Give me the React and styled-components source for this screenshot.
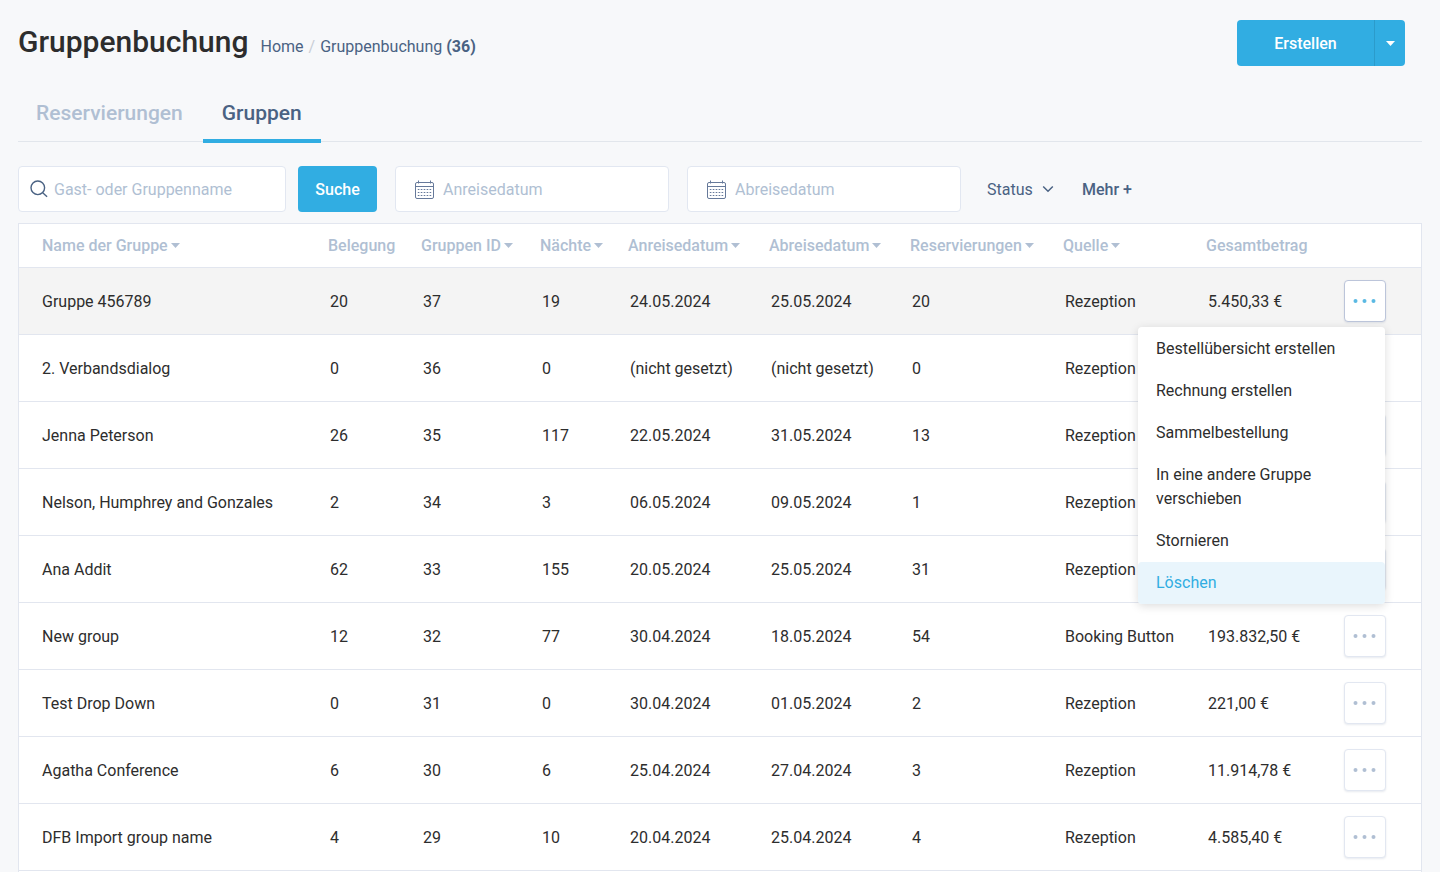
import React, { useState } from 'react';
import styled, { createGlobalStyle, css } from 'styled-components'

const columns = [
  { key: 'name', label: 'Name der Gruppe', width: 297, sort: true },
  { key: 'belegung', label: 'Belegung', width: 93 },
  { key: 'id', label: 'Gruppen ID', width: 119, sort: true },
  { key: 'naechte', label: 'Nächte', width: 88, sort: true },
  { key: 'anreise', label: 'Anreisedatum', width: 141, sort: true },
  { key: 'abreise', label: 'Abreisedatum', width: 141, sort: true },
  { key: 'reservierungen', label: 'Reservierungen', width: 153, sort: true },
  { key: 'quelle', label: 'Quelle', width: 143, sort: true },
  { key: 'betrag', label: 'Gesamtbetrag', width: 138 },
]

const groups = [
  { name: 'Gruppe 456789', belegung: 20, id: 37, naechte: 19, anreise: '24.05.2024', abreise: '25.05.2024', reservierungen: 20, quelle: 'Rezeption', betrag: '5.450,33 €' },
  { name: '2. Verbandsdialog', belegung: 0, id: 36, naechte: 0, anreise: '(nicht gesetzt)', abreise: '(nicht gesetzt)', reservierungen: 0, quelle: 'Rezeption', betrag: '', locked: true },
  { name: 'Jenna Peterson', belegung: 26, id: 35, naechte: 117, anreise: '22.05.2024', abreise: '31.05.2024', reservierungen: 13, quelle: 'Rezeption', betrag: '' },
  { name: 'Nelson, Humphrey and Gonzales', belegung: 2, id: 34, naechte: 3, anreise: '06.05.2024', abreise: '09.05.2024', reservierungen: 1, quelle: 'Rezeption', betrag: '' },
  { name: 'Ana Addit', belegung: 62, id: 33, naechte: 155, anreise: '20.05.2024', abreise: '25.05.2024', reservierungen: 31, quelle: 'Rezeption', betrag: '' },
  { name: 'New group', belegung: 12, id: 32, naechte: 77, anreise: '30.04.2024', abreise: '18.05.2024', reservierungen: 54, quelle: 'Booking Button', betrag: '193.832,50 €' },
  { name: 'Test Drop Down', belegung: 0, id: 31, naechte: 0, anreise: '30.04.2024', abreise: '01.05.2024', reservierungen: 2, quelle: 'Rezeption', betrag: '221,00 €' },
  { name: 'Agatha Conference', belegung: 6, id: 30, naechte: 6, anreise: '25.04.2024', abreise: '27.04.2024', reservierungen: 3, quelle: 'Rezeption', betrag: '11.914,78 €' },
  { name: 'DFB Import group name', belegung: 4, id: 29, naechte: 10, anreise: '20.04.2024', abreise: '25.04.2024', reservierungen: 4, quelle: 'Rezeption', betrag: '4.585,40 €' },
]

const actions = [
  'Bestellübersicht erstellen',
  'Rechnung erstellen',
  'Sammelbestellung',
  'In eine andere Gruppe verschieben',
  'Stornieren',
  'Löschen',
]

function App() {
  const [tab, setTab] = useState('Gruppen')
  const [openId, setOpenId] = useState(37)

  return (
    <Page>
      <GlobalStyle />
      <Header>
        <Heading>
          <Title>Gruppenbuchung</Title>
          <Breadcrumb>
            <Crumb href="#home">Home</Crumb>
            <Slash>/</Slash>
            <Crumb href="#gruppen">Gruppenbuchung <b>(36)</b></Crumb>
          </Breadcrumb>
        </Heading>
        <SplitButton>
          <CreateBtn type="button">Erstellen</CreateBtn>
          <CreateMore type="button" aria-label="Erstellen Optionen"><Caret /></CreateMore>
        </SplitButton>
      </Header>

      <Tabs role="tablist">
        {['Reservierungen', 'Gruppen'].map((name) => (
          <Tab
            key={name}
            type="button"
            role="tab"
            aria-selected={tab === name}
            $active={tab === name}
            onClick={() => setTab(name)}>
            {name}
          </Tab>
        ))}
      </Tabs>

      <Filters />

      <Panel>
        <Table>
          <colgroup>
            {columns.map((c) => <col key={c.key} width={c.width} />)}
            <col width={89} />
          </colgroup>
          <thead>
            <tr>
              {columns.map((c) => (
                <Th key={c.key} scope="col">
                  {c.sort ? <SortBtn type="button">{c.label}<Caret /></SortBtn> : c.label}
                </Th>
              ))}
              <Th as="td" />
            </tr>
          </thead>
          <tbody>
            {groups.map((g) => (
              <Row key={g.id} $active={openId === g.id}>
                {columns.map((c) => <Td key={c.key}>{g[c.key]}</Td>)}
                <ActionTd>
                  {!g.locked && (
                    <ActionMenu
                      name={g.name}
                      open={openId === g.id}
                      onToggle={() => setOpenId(openId === g.id ? null : g.id)} />
                  )}
                </ActionTd>
              </Row>
            ))}
          </tbody>
        </Table>
      </Panel>
    </Page>
  );
}

function Filters() {
  return (
    <FilterBar>
      <SearchField>
        <SearchIcon />
        <Input type="text" aria-label="Gast- oder Gruppenname" placeholder="Gast- oder Gruppenname" />
      </SearchField>
      <SearchBtn type="button">Suche</SearchBtn>
      <DateField>
        <CalendarIcon />
        <Input type="text" aria-label="Anreisedatum" placeholder="Anreisedatum" />
      </DateField>
      <DateField>
        <CalendarIcon />
        <Input type="text" aria-label="Abreisedatum" placeholder="Abreisedatum" />
      </DateField>
      <StatusField>
        <Select aria-label="Status" defaultValue="Status">
          <option>Status</option>
        </Select>
        <ChevronIcon />
      </StatusField>
      <MoreBtn type="button">Mehr +</MoreBtn>
    </FilterBar>
  )
}

function ActionMenu({ name, open, onToggle }) {
  return (
    <MenuWrap>
      <DotsBtn type="button" aria-label={name} aria-expanded={open} $open={open} onClick={onToggle}>
        <svg width="24" height="4" viewBox="0 0 24 4" fill="currentColor">
          <circle cx="2.5" cy="2" r="2" />
          <circle cx="11.5" cy="2" r="2" />
          <circle cx="20.5" cy="2" r="2" />
        </svg>
      </DotsBtn>
      {open && (
        <Menu role="menu">
          {actions.map((a) => (
            <MenuItem key={a} type="button" role="menuitem" $active={a === 'Löschen'}>{a}</MenuItem>
          ))}
        </Menu>
      )}
    </MenuWrap>
  )
}

function Caret() {
  return (
    <svg width="9" height="5" viewBox="0 0 9 5" fill="currentColor">
      <path d="M0 0h9L4.5 5z" />
    </svg>
  )
}

function SearchIcon() {
  return (
    <svg width="18" height="18" viewBox="0 0 18 18" fill="none" stroke="#4a6283" strokeWidth="1.4">
      <circle cx="7.8" cy="7.8" r="6.8" />
      <path d="M12.7 12.7l4.4 4" />
    </svg>
  )
}

function CalendarIcon() {
  return (
    <svg width="19" height="19" viewBox="0 0 19 19" fill="none" stroke="#66799a">
      <rect x="0.5" y="2.5" width="18" height="16" rx="1.5" />
      <path d="M0.5 6.5h18M3.5 0.5v3M15.5 0.5v3" />
      <path d="M2.8 9.5h13.4M2.8 12.5h13.4M2.8 15.5h13.4" strokeDasharray="1.6 1.35" />
    </svg>
  )
}

function ChevronIcon() {
  return (
    <svg width="12" height="8" viewBox="0 0 12 8" fill="none" stroke="#4a6283" strokeWidth="1.5">
      <path d="M1.2 1.5L6 6.2l4.8-4.7" />
    </svg>
  )
}

export default App;

const GlobalStyle = createGlobalStyle`
  *, *::before, *::after {
    box-sizing: border-box;
  }
  body {
    margin: 0;
    background-color: #f7f8fa;
    color: #2d2d2d;
    font-family: Roboto, "Liberation Sans", sans-serif;
    font-size: 16px;
  }
  button, input, select {
    margin: 0;
    padding: 0;
    border: 0;
    background: none;
    color: inherit;
    font: inherit;
  }
  button, select {
    cursor: pointer;
  }
  svg {
    display: block;
    flex: none;
  }
`
const Page = styled.main`
  display: flex;
  flex-direction: column;
  min-height: 100vh;
  padding: 20px 18px 0;
`
const Header = styled.header`
  display: flex;
  justify-content: space-between;
  align-items: flex-start;
  padding-right: 17px;
`
const Heading = styled.div`
  display: flex;
  align-items: baseline;
  gap: 12px;
`
const Title = styled.h1`
  margin: 0;
  font-size: 30px;
  line-height: 44px;
  font-weight: 500;
`
const Breadcrumb = styled.nav`
  display: flex;
  gap: 5px;
  color: #4a6283;
`
const Crumb = styled.a`
  color: inherit;
  text-decoration: none;
`
const Slash = styled.span`
  color: #c9ced6;
`
const SplitButton = styled.div`
  display: flex;
  height: 46px;
  border-radius: 4px;
  background-color: #31ade2;
  color: #fff;
`
const CreateBtn = styled.button`
  width: 137px;
  font-weight: 500;
`
const CreateMore = styled.button`
  display: flex;
  align-items: center;
  justify-content: center;
  width: 31px;
  border-left: 1px solid #2b9bcb;
`
const Tabs = styled.div`
  display: flex;
  gap: 2px;
  height: 76px;
  border-bottom: 1px solid #e2e6ec;
`
const Tab = styled.button`
  min-width: 118px;
  height: 77px;
  padding: 20px 18px 0;
  border-bottom: 4px solid transparent;
  color: #b0bfd3;
  font-size: 21px;
  font-weight: 500;
  ${({ $active }) => $active && css`
    border-color: #31ade2;
    color: #4a6283;
  `}
`
const FilterBar = styled.div`
  display: flex;
  align-items: center;
  padding: 24px 0 11px;
`
const field = css`
  display: flex;
  align-items: center;
  height: 46px;
  border: 1px solid #e2e7f1;
  border-radius: 4px;
  background-color: #fff;
`
const SearchField = styled.div`
  ${field}
  width: 268px;
  gap: 6px;
  padding: 0 12px 0 11px;
`
const DateField = styled.div`
  ${field}
  width: 274px;
  gap: 9px;
  margin-left: 18px;
  padding: 0 18px 0 19px;
`
const Input = styled.input`
  flex: 1;
  min-width: 0;
  height: 100%;
  outline: none;
  &::placeholder {
    color: #b0bfd3;
    opacity: 1;
  }
`
const SearchBtn = styled.button`
  width: 79px;
  height: 46px;
  margin-left: 12px;
  border-radius: 4px;
  background-color: #31ade2;
  color: #fff;
  font-weight: 500;
`
const StatusField = styled.div`
  display: flex;
  align-items: center;
  gap: 9px;
  margin-left: 26px;
  color: #4a6283;
`
const Select = styled.select`
  appearance: none;
  outline: none;
`
const MoreBtn = styled.button`
  margin-left: 28px;
  color: #4a6283;
  font-weight: 500;
`
const Panel = styled.section`
  flex: 1;
  border: 1px solid #e2e6ef;
  border-bottom: 0;
  background-color: #fff;
`
const Table = styled.table`
  width: 100%;
  table-layout: fixed;
  border-collapse: separate;
  border-spacing: 0;
`
const Th = styled.th`
  height: 44px;
  padding: 0 0 0 12px;
  border-bottom: 1px solid #e2e6ef;
  color: #b0bfd3;
  font-weight: 500;
  text-align: left;
  white-space: nowrap;
  &:first-child {
    padding-left: 23px;
  }
`
const SortBtn = styled.button`
  display: inline-flex;
  align-items: center;
  gap: 3px;
`
const Row = styled.tr`
  background-color: ${({ $active }) => $active ? '#f4f4f4' : '#fff'};
`
const Td = styled.td`
  height: 67px;
  padding: 0 0 0 14px;
  border-bottom: 1px solid #e2e6ef;
  white-space: nowrap;
  &:first-child {
    padding-left: 23px;
  }
`
const ActionTd = styled(Td)`
  padding-left: 12px;
`
const MenuWrap = styled.div`
  position: relative;
  width: 42px;
`
const DotsBtn = styled.button`
  display: flex;
  align-items: center;
  justify-content: center;
  width: 42px;
  height: 42px;
  border: 1px solid ${({ $open }) => $open ? '#bcc5da' : '#e2e7f1'};
  border-radius: 4px;
  background-color: #fff;
  box-shadow: 0 1px 2px rgba(60, 80, 120, .12);
  color: ${({ $open }) => $open ? '#5bb9e3' : '#b0bfd3'};
`
const Menu = styled.div`
  position: absolute;
  top: 47px;
  right: 1px;
  z-index: 2;
  width: 247px;
  padding-top: 1px;
  border-radius: 4px;
  background-color: #fff;
  box-shadow: 0 2px 10px rgba(0, 0, 0, .14);
  white-space: normal;
`
const MenuItem = styled.button`
  display: block;
  width: 100%;
  padding: 9px 18px;
  border-radius: 4px;
  line-height: 24px;
  text-align: left;
  ${({ $active }) => $active && css`
    background-color: #e9f5fc;
    color: #31ade2;
  `}
`
